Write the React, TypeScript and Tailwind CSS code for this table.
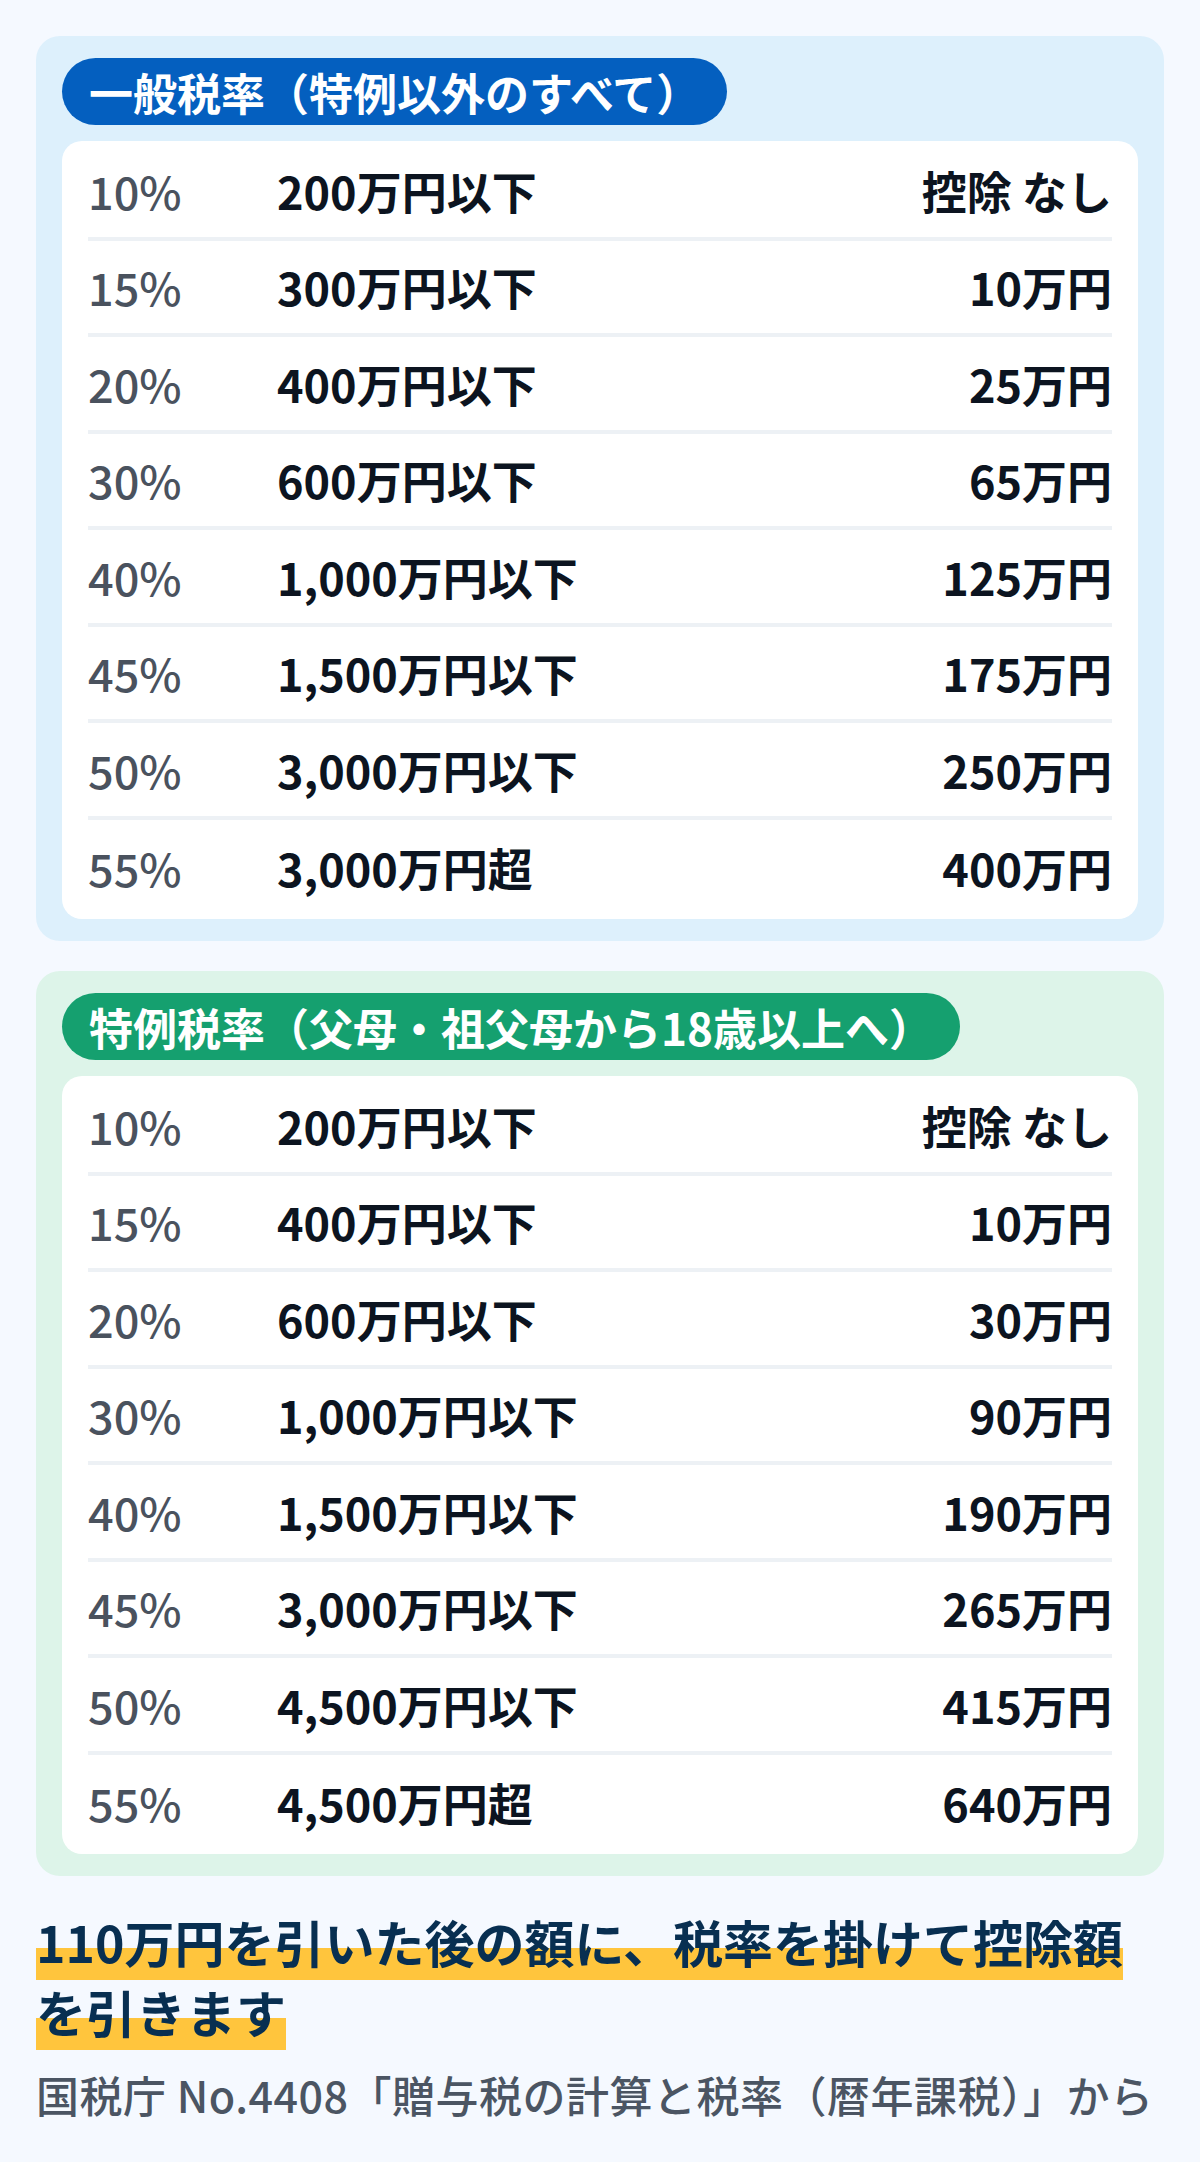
import React from "react";

type Row = [string, string, string];

const general: Row[] = [
  ["10%", "200万円以下", "控除 なし"],
  ["15%", "300万円以下", "10万円"],
  ["20%", "400万円以下", "25万円"],
  ["30%", "600万円以下", "65万円"],
  ["40%", "1,000万円以下", "125万円"],
  ["45%", "1,500万円以下", "175万円"],
  ["50%", "3,000万円以下", "250万円"],
  ["55%", "3,000万円超", "400万円"],
];

const special: Row[] = [
  ["10%", "200万円以下", "控除 なし"],
  ["15%", "400万円以下", "10万円"],
  ["20%", "600万円以下", "30万円"],
  ["30%", "1,000万円以下", "90万円"],
  ["40%", "1,500万円以下", "190万円"],
  ["45%", "3,000万円以下", "265万円"],
  ["50%", "4,500万円以下", "415万円"],
  ["55%", "4,500万円超", "640万円"],
];

function Table({ rows }: { rows: Row[] }) {
  return (
    <div className="bg-white rounded-[20px] px-[26px] py-[3px]">
      {rows.map((r, i) => (
        <div
          key={i}
          className={
            "flex items-center h-[96.5px] " +
            (i < rows.length - 1 ? "border-b-4 border-[#edf1f5]" : "")
          }
        >
          <div className="w-[189px] text-[45px] font-medium text-[#4a525e]">{r[0]}</div>
          <div className="flex-1 text-[45px] font-bold text-[#0c1420]">{r[1]}</div>
          <div className="text-[45px] font-bold text-[#0c1420] text-right">{r[2]}</div>
        </div>
      ))}
    </div>
  );
}

function Panel({
  title,
  rows,
  variant,
}: {
  title: string;
  rows: Row[];
  variant: "blue" | "green";
}) {
  const panelBg = variant === "blue" ? "bg-[#ddf0fc]" : "bg-[#ddf4e9]";
  const pillBg = variant === "blue" ? "bg-[#045fbf]" : "bg-[#15a06f]";
  return (
    <div className={"rounded-[24px] px-[26px] pt-[22px] pb-[22px] flex flex-col " + panelBg}>
      <div
        className={
          "self-start h-[67px] rounded-full px-[27px] flex items-center text-[44px] font-bold text-white leading-none " +
          pillBg
        }
      >
        {title}
      </div>
      <div className="mt-[16px]">
        <Table rows={rows} />
      </div>
    </div>
  );
}

export default function App() {
  return (
    <div className="w-[1200px] min-h-[2162px] bg-[#f5f9ff] px-[36px] pt-[36px] pb-[37px] font-['Noto_Sans_CJK_JP','Noto_Sans',sans-serif]">
      <Panel title="一般税率（特例以外のすべて）" rows={general} variant="blue" />
      <div className="mt-[30px]">
        <Panel title="特例税率（父母・祖父母から18歳以上へ）" rows={special} variant="green" />
      </div>
      <p className="mt-[30px] text-[50px] leading-[70px] font-bold text-[#082f51]">
        <span className="bg-[linear-gradient(transparent_58%,#ffc53d_58%)] pb-[3px] [box-decoration-break:clone] [-webkit-box-decoration-break:clone]">
          110万円を引いた後の額に、税率を掛けて控除額を引きます
        </span>
      </p>
      <p className="mt-[17px] text-[43px] tracking-[0.5px] leading-[63px] font-medium text-[#4b5563]">
        国税庁 No.4408「贈与税の計算と税率（暦年課税）」から
      </p>
    </div>
  );
}
